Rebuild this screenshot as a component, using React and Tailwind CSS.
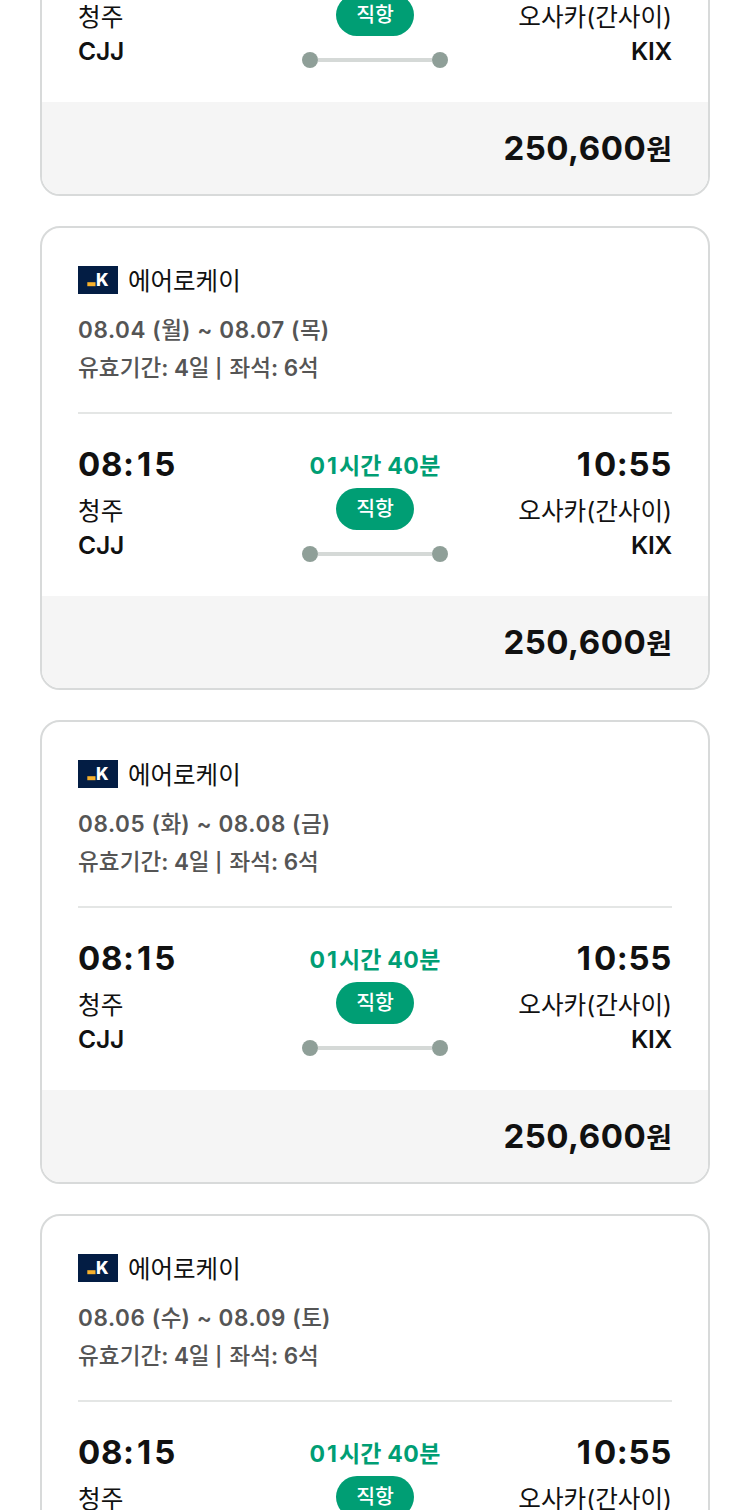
const TICKETS = [
  { id: 1, period: '08.03 (일) ~ 08.06 (수)' },
  { id: 2, period: '08.04 (월) ~ 08.07 (목)' },
  { id: 3, period: '08.05 (화) ~ 08.08 (금)' },
  { id: 4, period: '08.06 (수) ~ 08.09 (토)' },
]

// Wider tracking goes on everything but Hangul, and "1" keeps a full digit's width
function Mixed({ text, hangulClass = 'tracking-normal' }) {
  return text.split(/([가-힣]+|1)/).map((part, i) => {
    if (part === '1') return <span key={i} className="mx-[0.07em]">1</span>
    return i % 2 ? <span key={i} className={hangulClass}>{part}</span> : part
  })
}

function AirlineLogo() {
  return (
    <svg width="40" height="28" viewBox="0 0 40 28" className="shrink-0">
      <rect width="40" height="28" fill="#031d44" />
      <rect x="9.3" y="16.2" width="8.2" height="4" fill="#f6b02c" />
      <text x="18" y="20" fill="#fff" fontFamily="Inter, sans-serif" fontSize="17" fontWeight="800">K</text>
    </svg>
  )
}

function Route() {
  return (
    <div className="mt-4 flex w-[146px] items-center">
      <span className="size-4 rounded-full bg-[#8f9f98]" />
      <span className="h-1 flex-1 bg-[#d5d9d7]" />
      <span className="size-4 rounded-full bg-[#8f9f98]" />
    </div>
  )
}

function Airport({ time, city, code, align }) {
  return (
    <div className={align === 'right' ? 'w-[200px] text-right' : 'w-[200px]'}>
      <p className="text-[33px] leading-10 font-bold tracking-[0.02em]"><Mixed text={time} /></p>
      <p className="mt-2.5 text-[24.6px] leading-[34px]">{city}</p>
      <p className="text-[24.6px] leading-[34px] font-semibold tracking-[-0.01em]">{code}</p>
    </div>
  )
}

function TicketCard({ period }) {
  return (
    <article className="h-[464px] shrink-0 overflow-hidden rounded-[20px] border-2 border-[#d8dada] bg-white">
      <div className="px-9 pt-9">
        <div className="flex h-8 items-center gap-2.5">
          <AirlineLogo />
          <span className="pt-0.5 text-[24.5px] leading-8">에어로케이</span>
        </div>
        <div className="mt-[15px] text-[22.5px] font-semibold whitespace-nowrap text-[#555]">
          <p className="h-[38px] leading-[38px] tracking-[0.026em]">
            <Mixed text={period} hangulClass="font-medium tracking-normal" />
          </p>
          <p className="h-[38px] leading-[38px] tracking-[-0.005em]">
            <Mixed text="유효기간: 4일 " hangulClass="font-medium tracking-[0.005em]" />
            <span className="mr-0.5 align-[1px] text-[19px] leading-none">|</span>
            <Mixed text=" 좌석: 6석" hangulClass="font-medium tracking-[0.005em]" />
          </p>
        </div>
        <div className="mt-[25px] h-0.5 bg-[#e4e6e5]" />
        <div className="flex h-[182px] justify-between pt-[30px]">
          <Airport time="08:15" city="청주" code="CJJ" />
          <div className="flex flex-col items-center">
            <p className="text-[23px] leading-11 font-bold tracking-[0.02em] text-[#009e74]">
              <Mixed text="01시간 40분" />
            </p>
            <span className="flex h-[42px] w-[78px] items-center justify-center rounded-full bg-[#009e74] text-[20.5px] font-medium text-white">
              직항
            </span>
            <Route />
          </div>
          <Airport time="10:55" city="오사카(간사이)" code="KIX" align="right" />
        </div>
      </div>
      <div className="flex h-[92px] items-center justify-end bg-[#f5f5f5] px-9 pt-0.5">
        <p className="text-[33px] leading-10 font-bold tracking-[0.016em]">
          250,600<span className="text-[28px] tracking-normal">원</span>
        </p>
      </div>
    </article>
  )
}

export default function App() {
  return (
    <main className="h-[1510px] overflow-hidden bg-white font-[Inter,'Noto_Sans_CJK_KR',sans-serif] text-[#111]">
      <div className="-mt-[268px] flex flex-col gap-[30px] px-10">
        {TICKETS.map((ticket) => (
          <TicketCard key={ticket.id} period={ticket.period} />
        ))}
      </div>
    </main>
  )
}
